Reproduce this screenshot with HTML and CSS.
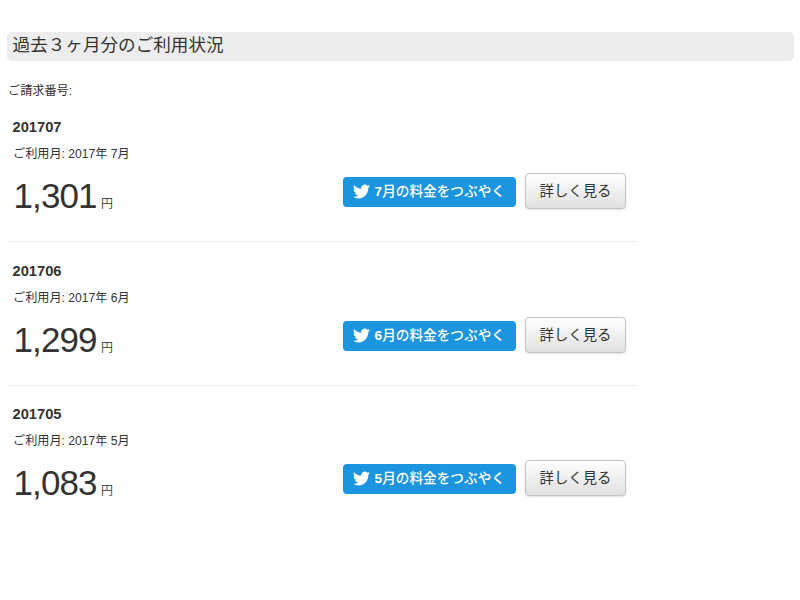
FILE: index.html
```html
<!DOCTYPE html>
<html lang="ja">
<head>
<meta charset="utf-8">
<title>ご利用状況</title>
<link rel="stylesheet" href="styles.css">
</head>
<body>
<svg width="0" height="0" class="defs"><symbol id="bird" viewBox="0 0 24 24"><path d="M23.95 4.57a10 10 0 0 1-2.82.77 4.96 4.96 0 0 0 2.16-2.72c-.95.55-2 .95-3.13 1.18a4.92 4.92 0 0 0-8.38 4.48C7.69 8.1 4.07 6.13 1.64 3.16a4.92 4.92 0 0 0 1.52 6.57 4.9 4.9 0 0 1-2.23-.61v.06a4.92 4.92 0 0 0 3.95 4.83 5 5 0 0 1-2.21.08 4.94 4.94 0 0 0 4.6 3.42A9.87 9.87 0 0 1 0 19.54a14 14 0 0 0 7.55 2.21c9.05 0 14-7.5 14-13.98 0-.21 0-.42-.02-.63a9.94 9.94 0 0 0 2.42-2.57z"/></symbol></svg>
<h1 class="title">過去３ヶ月分のご利用状況</h1>
<p class="number">ご請求番号:</p>
<main class="bills">
<section class="bill">
<h2 class="code">201707</h2>
<p class="month">ご利用月: 2017年 7月</p>
<div class="row"><p class="price"><span class="amount">1,301</span><span class="yen">円</span></p><a class="tweet"><svg class="bird"><use href="#bird"/></svg><span><b>7</b>月の料金をつぶやく</span></a><a class="detail">詳しく見る</a></div>
</section>
<section class="bill">
<h2 class="code">201706</h2>
<p class="month">ご利用月: 2017年 6月</p>
<div class="row"><p class="price"><span class="amount">1,299</span><span class="yen">円</span></p><a class="tweet"><svg class="bird"><use href="#bird"/></svg><span><b>6</b>月の料金をつぶやく</span></a><a class="detail">詳しく見る</a></div>
</section>
<section class="bill">
<h2 class="code">201705</h2>
<p class="month">ご利用月: 2017年 5月</p>
<div class="row"><p class="price"><span class="amount">1,083</span><span class="yen">円</span></p><a class="tweet"><svg class="bird"><use href="#bird"/></svg><span><b>5</b>月の料金をつぶやく</span></a><a class="detail">詳しく見る</a></div>
</section>
</main>
</body>
</html>
```
FILE: styles.css
```css
* { box-sizing: border-box; }
body {
  margin: 0;
  padding: 31.5px 6px 0 7px;
  background: #fff;
  color: #333;
  font-family: "Liberation Sans", "Noto Sans CJK JP", sans-serif;
}
h1, h2, p { margin: 0; }
.defs { display: block; height: 0; }
.title {
  height: 29.5px;
  padding-left: 5.5px;
  border-radius: 5px;
  background: #ededed;
  font-size: 17.6px;
  font-weight: 400;
  line-height: 27px;
}
.number { margin: 21px 0 0 1px; font-size: 12.15px; line-height: 18px; }
.bills { width: 629px; }
.bill { height: 144px; padding: 19px 10px 0 5.5px; border-bottom: 1px solid #eee; }
.bill:first-child { height: 142px; padding-top: 17px; }
.bill:last-child { padding-top: 18.4px; border-bottom: 0; }
.code { font-size: 14.7px; line-height: 20px; }
.month { margin: 8px 0 0 .5px; font-size: 12.15px; line-height: 18px; }
.row { display: flex; align-items: center; height: 36px; margin-top: 10px; }
.price { display: flex; align-items: baseline; flex: 1; padding-top: 10px; }
.amount { width: 85px; margin-left: 1px; font-size: 35px; letter-spacing: -.9px; line-height: 36px; }
.yen { margin-left: 2.5px; font-size: 12px; font-weight: 350; }
.tweet, .detail { display: flex; align-items: center; justify-content: center; white-space: nowrap; }
.tweet {
  width: 173px;
  height: 30px;
  margin-top: 1px;
  padding-right: 1px;
  border-radius: 4px;
  background: #1b95e0;
  color: #fff;
  font-size: 13.65px;
  font-weight: 500;
}
.tweet span { padding-bottom: 3px; }
.tweet b { font-weight: 700; }
.bird { width: 17px; height: 17px; margin-right: 4.5px; fill: #fff; }
.detail {
  width: 101px;
  height: 36px;
  margin-left: 9px;
  padding-bottom: 4px;
  border: 1px solid #c4c4c4;
  border-radius: 4px;
  background: linear-gradient(#fff, #e0e0e0);
  box-shadow: 0 1px 2px rgba(0, 0, 0, .12);
  font-size: 14.4px;
}
```
